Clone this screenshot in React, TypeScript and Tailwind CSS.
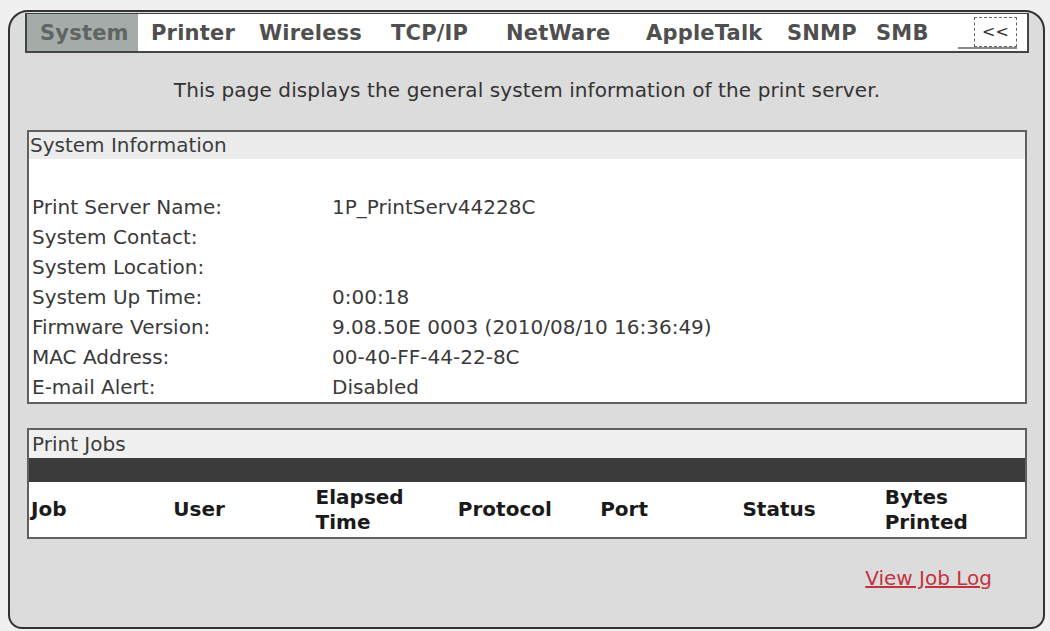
const tabs = [
  { label: 'System', w: 'w-[111px]', active: true },
  { label: 'Printer', w: 'w-[108px]' },
  { label: 'Wireless', w: 'w-[132px]' },
  { label: 'TCP/IP', w: 'w-[115px]' },
  { label: 'NetWare', w: 'w-[140px]' },
  { label: 'AppleTalk', w: 'w-[141px]' },
  { label: 'SNMP', w: 'w-[89px]' },
  { label: 'SMB', w: 'w-[95px]' },
];

const info = [
  ['Print Server Name:', '1P_PrintServ44228C'],
  ['System Contact:', ''],
  ['System Location:', ''],
  ['System Up Time:', '0:00:18'],
  ['Firmware Version:', '9.08.50E 0003 (2010/08/10 16:36:49)'],
  ['MAC Address:', '00-40-FF-44-22-8C'],
  ['E-mail Alert:', 'Disabled'],
];

const cols = [
  ['Job'],
  ['User'],
  ['Elapsed', 'Time'],
  ['Protocol'],
  ['Port'],
  ['Status'],
  ['Bytes', 'Printed'],
];

export default function App() {
  return (
    <div className="w-[1050px] h-[631px] bg-[#f0f0f0] pt-[10px] pl-[8px] pr-[5px] font-['DejaVu_Sans',Verdana,sans-serif]">
      <div className="h-[619px] border-2 border-[#333] rounded-t-[20px] rounded-b-[14px] bg-[#dcdcdc] pl-[15px] pr-[14px]">
        {/* tab bar */}
        <div className="mt-[1px] h-[40px] flex bg-white border-t border-l-2 border-r-2 border-b-2 border-[#444]">
          {tabs.map((t) => (
            <div
              key={t.label}
              className={`${t.w} h-full flex items-center pl-[13px] pt-[3px] text-[21px] tracking-[0.2px] font-bold ${
                t.active ? 'bg-[#a4aba8] text-[#5e6562]' : 'text-[#4f4f4f]'
              }`}
            >
              {t.label}
            </div>
          ))}
          <div className="flex-1 flex flex-col items-end pr-[10px]">
            <div className="mt-[3px] w-[43px] h-[30px] border border-dashed border-[#666] flex items-center justify-center text-[16px] text-[#333]">
              &lt;&lt;
            </div>
            <div className="mt-auto mb-[2px] w-full border-b-2 border-[#888] ml-[10px]" />
          </div>
        </div>

        <p className="mt-[25px] leading-[24px] text-[20px] tracking-[0.1px] text-[#333] text-center">
          This page displays the general system information of the print server.
        </p>

        {/* system information */}
        <div className="mx-[2px] mt-[28px] border-2 border-[#606060] bg-white">
          <div className="h-[27px] bg-[#ececec] pl-[1px] text-[20px] leading-[27px] text-[#3c3c3c]">
            System Information
          </div>
          <div className="pt-[33px] pl-[3px]">
            {info.map(([k, v]) => (
              <div key={k} className="grid grid-cols-[300px_1fr] h-[30px] items-center text-[20px] text-[#3a3a3a]">
                <span>{k}</span>
                <span>{v}</span>
              </div>
            ))}
          </div>
        </div>

        {/* print jobs */}
        <div className="mx-[2px] mt-[24px] border-2 border-[#606060] bg-white">
          <div className="h-[28px] bg-[#f0f0f0] pl-[3px] text-[20px] leading-[28px] text-[#3c3c3c]">
            Print Jobs
          </div>
          <div className="h-[24px] bg-[#3b3b3b]" />
          <div className="grid grid-cols-7 h-[55px] items-center">
            {cols.map((c) => (
              <div key={c[0]} className="pl-[2px] text-[20px] font-bold leading-[25px] text-[#1a1a1a]">
                {c.map((l) => (
                  <div key={l}>{l}</div>
                ))}
              </div>
            ))}
          </div>
        </div>

        <div className="mx-[2px] mt-[27px] pr-[35px] text-right leading-[24px]">
          <a href="#" className="text-[20px] text-[#c2333f] underline">
            View Job Log
          </a>
        </div>
      </div>
    </div>
  );
}
